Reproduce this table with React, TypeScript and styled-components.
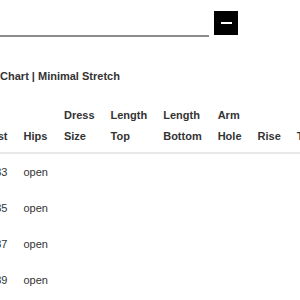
import React from 'react'
import styled, { createGlobalStyle } from 'styled-components'

const GlobalStyle = createGlobalStyle`
  html, body {
    margin: 0;
    padding: 0;
    background: #fff;
    overflow: hidden;
  }
  body {
    font-family: 'Liberation Sans', Arial, Helvetica, sans-serif;
    color: #333;
  }
`

type Row = {
  bust: string
  hips: string
}

const columns = ['Bust', 'Hips', 'Dress Size', 'Length Top', 'Length Bottom', 'Arm Hole', 'Rise', 'Thigh']

const rows: Row[] = [
  { bust: '33', hips: 'open' },
  { bust: '35', hips: 'open' },
  { bust: '37', hips: 'open' },
  { bust: '39', hips: 'open' },
  { bust: '41', hips: 'open' },
]

const App: React.FC = () => {
  return (
    <>
      <GlobalStyle />
      <Page>
        <SearchBar>
          <SearchInput type='text' aria-label='Search' />
          <ToggleButton aria-label='Collapse'>
            <Minus />
          </ToggleButton>
        </SearchBar>

        <ChartTitle>Size Chart | Minimal Stretch</ChartTitle>

        <SizeTable>
          <thead>
            <tr>
              {columns.map((col) => (
                <HeadCell key={col}>{col}</HeadCell>
              ))}
            </tr>
          </thead>
          <tbody>
            {rows.map((row, i) => (
              <tr key={i}>
                <Cell $numeric>{row.bust}</Cell>
                <Cell>{row.hips}</Cell>
                <Cell />
                <Cell />
                <Cell />
                <Cell />
                <Cell />
                <Cell />
              </tr>
            ))}
          </tbody>
        </SizeTable>
      </Page>
    </>
  )
}

export default App

const Page = styled.div`
  margin-left: -25px;
  width: 400px;
`

const SearchBar = styled.div`
  display: flex;
  align-items: flex-start;
  gap: 5px;
  width: 263px;
  padding-top: 11px;
`

const SearchInput = styled.input`
  flex: 1;
  height: 26px;
  box-sizing: border-box;
  border: none;
  border-bottom: 2px solid #8c8c8c;
  outline: none;
  background: transparent;
  padding: 0;
`

const ToggleButton = styled.button`
  flex: none;
  width: 24px;
  height: 24px;
  padding: 0;
  border: none;
  background: #000;
  display: flex;
  align-items: center;
  justify-content: center;
`

const Minus = styled.span`
  display: block;
  width: 11px;
  height: 2px;
  background: #fff;
`

const ChartTitle = styled.h3`
  margin: 32px 0 21px;
  font-size: 11px;
  line-height: 15px;
  font-weight: bold;
  color: #333;
`

const SizeTable = styled.table`
  width: 1px;
  border-collapse: collapse;
  font-size: 11px;
  line-height: 21px;
`

const HeadCell = styled.th`
  padding: 0 8px 5px;
  text-align: left;
  vertical-align: bottom;
  font-weight: bold;
  color: #333;
  border-bottom: 2px solid #e8e8e8;
`

const Cell = styled.td<{ $numeric?: boolean }>`
  padding: 8px 8px 7px;
  text-align: ${(p) => (p.$numeric ? 'right' : 'left')};
  white-space: nowrap;
  color: #333;
  height: 21px;
`
